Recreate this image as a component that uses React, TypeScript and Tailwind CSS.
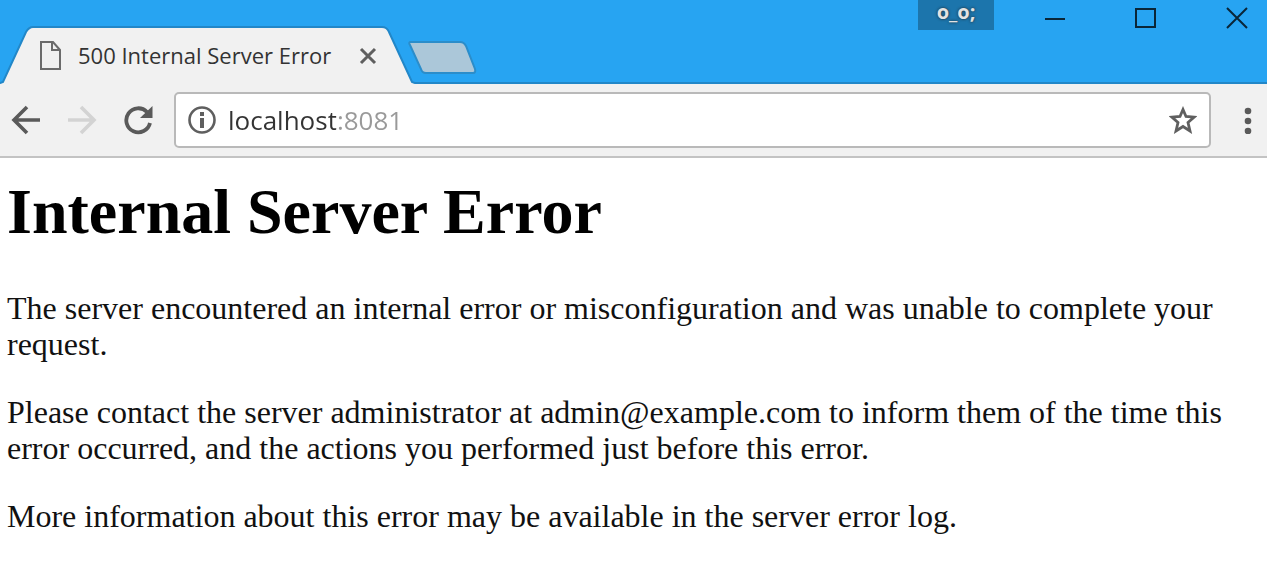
import React from "react";

function TabStrip() {
  return (
    <header className="flex h-[84px] items-end justify-between bg-[#27a4f2] shadow-[inset_0_-2px_0_#2287c8]">
      <div className="relative flex h-[58px] w-[415px] shrink-0 items-center pl-10">
        <svg className="absolute inset-0" width="415" height="58" viewBox="0 0 415 58" fill="none" aria-hidden="true">
          <path d="M0 58 L3 56 L26 6 Q29 1 33 1 H382 Q387 1 389 6 L412 56 L415 58 Z" fill="#f1f1f1" />
          <path d="M0 57 L3 56 L26 6 Q29 1 33 1 H382 Q387 1 389 6 L412 56 L415 57" stroke="#2287c8" strokeWidth="2" />
        </svg>
        <svg className="relative mr-4 shrink-0" width="22" height="30" viewBox="0 0 22 30" fill="none" stroke="#6b6b6b" strokeWidth="2" aria-hidden="true">
          <path d="M1 2 H13 L20 10 V29 H1 Z" />
          <path d="M12 2 V10 H20" />
        </svg>
        <span className="relative whitespace-nowrap text-[22px] leading-[32px] text-[#333]">500 Internal Server Error</span>
        <button aria-label="Close tab" className="absolute top-5 right-[37px] flex size-5 items-center justify-center">
          <svg width="18" height="18" viewBox="0 0 18 18" stroke="#5f5f5f" strokeWidth="3">
            <path d="M2 2 L16 16 M16 2 L2 16" />
          </svg>
        </button>
      </div>
      <button aria-label="New tab" className="mr-auto -ml-2 self-end pb-[9px]">
        <svg width="70" height="34" viewBox="0 0 70 34">
          <path d="M4 1 H53 Q57 1 59 5 L68 28 Q69 32 66 32 H19 Q15 32 14 28 L3 4 Q1 1 4 1 Z" fill="#abc7d9" stroke="#2b8dca" strokeWidth="2" />
        </svg>
      </button>
      <div className="flex items-start gap-[30px] self-start">
        <button className="h-[30px] w-[76px] bg-[#1c75ac] pb-[6px] text-[20px] leading-[24px] font-bold text-[#e3e3e3] [text-shadow:0_0_3px_#222]">o_o;</button>
        <button aria-label="Minimize" className="flex h-9 w-[61px] items-center justify-center">
          <svg width="22" height="22" viewBox="0 0 22 22" stroke="#0a2638" strokeWidth="2"><path d="M1 12 H21" /></svg>
        </button>
        <button aria-label="Maximize" className="flex h-9 w-[61px] items-center justify-center">
          <svg width="22" height="22" viewBox="0 0 22 22" fill="none" stroke="#0a2638" strokeWidth="2"><path d="M1 2 H20 V20 H1 Z" /></svg>
        </button>
        <button aria-label="Close" className="flex h-9 w-[61px] items-center justify-center">
          <svg width="22" height="22" viewBox="0 0 22 22" stroke="#0a2638" strokeWidth="2"><path d="M1 1 L21 21 M21 1 L1 21" /></svg>
        </button>
      </div>
    </header>
  );
}

function Toolbar() {
  return (
    <nav className="flex h-[74px] items-center border-b-2 border-[#c3c3c3] bg-[#f1f1f1]">
      <div className="mr-[10px] flex gap-1">
        <button aria-label="Back" className="flex h-12 w-[52px] items-center justify-center">
          <svg width="30" height="30" viewBox="0 0 30 30" fill="none" stroke="#5a5a5a" strokeWidth="3.6"><path d="M29 15 H4 M16 2 L3 15 L16 28" /></svg>
        </button>
        <button aria-label="Forward" className="flex h-12 w-[52px] items-center justify-center">
          <svg width="30" height="30" viewBox="0 0 30 30" fill="none" stroke="#d3d3d3" strokeWidth="3.6"><path d="M1 15 H26 M14 2 L27 15 L14 28" /></svg>
        </button>
        <button aria-label="Reload" className="flex h-12 w-[52px] items-center justify-center">
          <svg width="30" height="30" viewBox="0 0 30 30" fill="none">
            <path d="M24 7 A12 12 0 1 0 27 18" stroke="#5a5a5a" strokeWidth="3.8" />
            <path d="M29.5 1 V13 H17 Z" fill="#5a5a5a" />
          </svg>
        </button>
      </div>
      <div className="flex h-14 min-w-0 flex-1 items-center rounded-[5px] border-2 border-[#b9b9b9] bg-white px-3">
        <svg className="mr-3 shrink-0" width="28" height="28" viewBox="0 0 28 28" fill="none" aria-hidden="true">
          <circle cx="14" cy="14" r="12.5" stroke="#5f5f5f" strokeWidth="2.6" />
          <path d="M12 6 H16 V10 H12 Z M12 12 H16 V22 H12 Z" fill="#5f5f5f" />
        </svg>
        <input
          aria-label="Address"
          defaultValue="localhost:8081"
          className="min-w-0 flex-1 bg-[linear-gradient(to_right,#333_108px,#999_108px)] bg-clip-text text-[26px] leading-[36px] text-transparent caret-black outline-none"
        />
        <button aria-label="Bookmark this page" className="flex h-10 w-7 shrink-0 items-center justify-center">
          <svg width="28" height="28" viewBox="0 0 28 28" fill="none" stroke="#5f5f5f" strokeWidth="2.8">
            <path d="M14 3.5 L17 10.5 L25 11.2 L19 16.5 L21 25 L14 20.5 L7 25 L9 16.5 L3 11.2 L11 10.5 Z" />
          </svg>
        </button>
      </div>
      <button aria-label="Menu" className="ml-[18px] flex h-12 w-[38px] items-center justify-center">
        <svg width="8" height="28" viewBox="0 0 8 28" fill="#5a5a5a">
          <circle cx="4" cy="5" r="3.3" />
          <circle cx="4" cy="15" r="3.3" />
          <circle cx="4" cy="25" r="3.3" />
        </svg>
      </button>
    </nav>
  );
}

export default function App() {
  return (
    <div className="min-h-screen bg-white font-['Open_Sans','Noto_Sans',sans-serif]">
      <TabStrip />
      <Toolbar />
      <main className="px-[7px] pt-[18px] font-['Liberation_Serif',serif] text-[32px] leading-[36px] text-[#111]">
        <h1 className="mb-[42px] text-[64px] leading-[72px] font-bold text-black">Internal Server Error</h1>
        <p className="mb-8">
          The server encountered an internal error or misconfiguration and was unable to complete your request.
        </p>
        <p className="mb-8">
          Please contact the server administrator at admin@example.com to inform them of the time this error occurred,
          and the actions you performed just before this error.
        </p>
        <p>More information about this error may be available in the server error log.</p>
      </main>
    </div>
  );
}
